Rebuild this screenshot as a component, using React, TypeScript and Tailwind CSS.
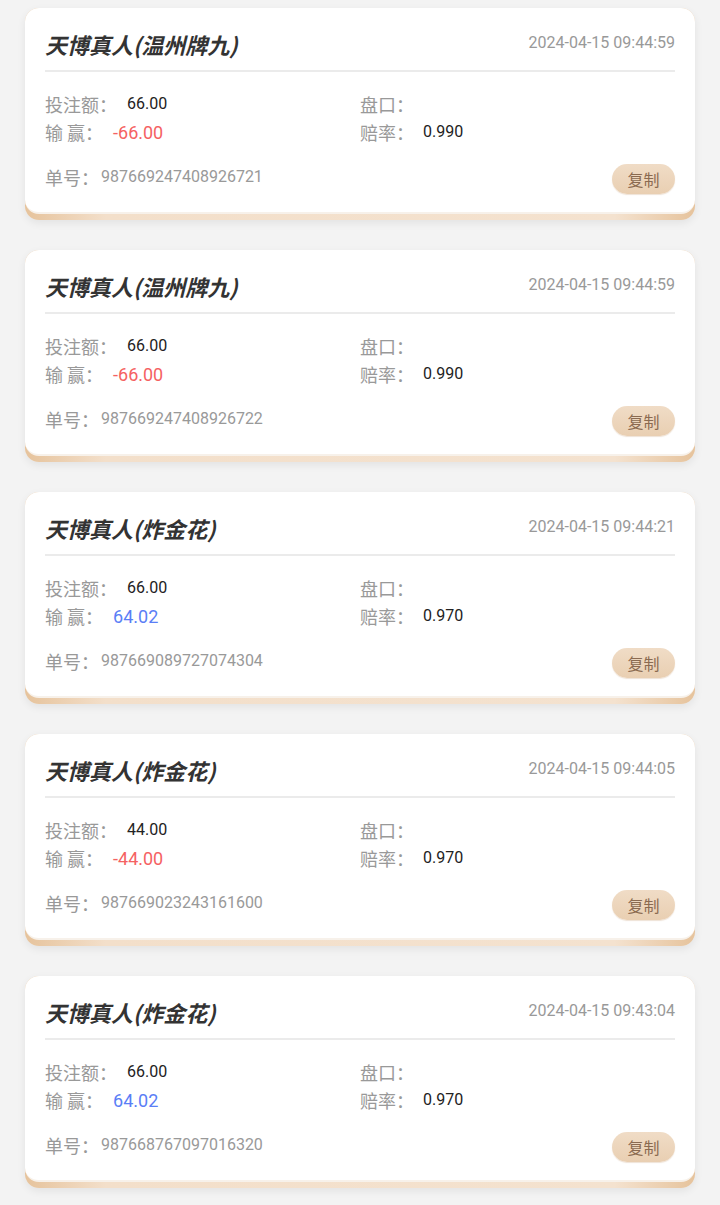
const bets = [
  { game: '温州牌九', time: '2024-04-15 09:44:59', amount: '66.00', win: '-66.00', odds: '0.990', no: '987669247408926721' },
  { game: '温州牌九', time: '2024-04-15 09:44:59', amount: '66.00', win: '-66.00', odds: '0.990', no: '987669247408926722' },
  { game: '炸金花', time: '2024-04-15 09:44:21', amount: '66.00', win: '64.02', odds: '0.970', no: '987669089727074304' },
  { game: '炸金花', time: '2024-04-15 09:44:05', amount: '44.00', win: '-44.00', odds: '0.970', no: '987669023243161600' },
  { game: '炸金花', time: '2024-04-15 09:43:04', amount: '66.00', win: '64.02', odds: '0.970', no: '987668767097016320' },
];

const cjk = "font-['Noto_Sans_CJK_SC',sans-serif]";
const num = "font-['Roboto','Noto_Sans_CJK_SC',sans-serif]";

function BetCard({ bet }: { bet: (typeof bets)[number] }) {
  const lost = bet.win.startsWith('-');
  return (
    <div className="rounded-[14px] bg-[linear-gradient(to_right,#e6c39c,#f3dfca_12%,#f4e2cf_88%,#e6c39c)] pb-[6px] shadow-[0_3px_8px_rgba(0,0,0,0.07)]">
      <div className="rounded-[14px] border-b-2 border-[#f7f1ea] bg-white px-[20px] pt-[22px] pb-[18px]">
        <div className="flex items-center justify-between">
          <div className={`${cjk} text-[22px] leading-[28px] font-bold italic text-[#333]`}>
            天博真人({bet.game})
          </div>
          <div className={`${num} text-[16px] leading-[24px] text-[#999] -mt-[2px]`}>{bet.time}</div>
        </div>
        <div className="mt-[12px] h-[2px] bg-[#ebebeb]" />
        <div className="mt-[18px] grid grid-cols-2">
          <div className="flex flex-col">
            <div className="flex items-center gap-[10px] h-[28px]">
              <span className={`${cjk} text-[18px] text-[#999]`}>投注额：</span>
              <span className={`${num} text-[16px] text-[#222]`}>{bet.amount}</span>
            </div>
            <div className="flex items-center gap-[10px] h-[28px]">
              <span className={`${cjk} text-[18px] text-[#999]`}>输 赢：</span>
              <span className={`${num} text-[18px] ${lost ? 'text-[#f56262]' : 'text-[#5a7ef6]'}`}>{bet.win}</span>
            </div>
          </div>
          <div className="flex flex-col">
            <div className="flex items-center gap-[10px] h-[28px]">
              <span className={`${cjk} text-[18px] text-[#999]`}>盘口：</span>
            </div>
            <div className="flex items-center gap-[9px] h-[28px]">
              <span className={`${cjk} text-[18px] text-[#999]`}>赔率：</span>
              <span className={`${num} text-[16px] text-[#222]`}>{bet.odds}</span>
            </div>
          </div>
        </div>
        <div className="mt-[18px] flex items-center justify-between h-[30px]">
          <div className="flex items-center gap-[2px] -mt-[4px]">
            <span className={`${cjk} text-[18px] text-[#999]`}>单号：</span>
            <span className={`${num} text-[16px] text-[#999]`}>{bet.no}</span>
          </div>
          <button className={`${cjk} h-[30px] w-[63px] rounded-full bg-[linear-gradient(to_bottom,#f0dcc6,#e9cfb2)] text-[16px] text-[#8a6a50] shadow-[0_1px_1px_rgba(200,160,120,0.3)]`}>
            复制
          </button>
        </div>
      </div>
    </div>
  );
}

export default function App() {
  return (
    <div className="min-h-[1205px] bg-[#f3f3f3] px-[25px] pt-[8px] pb-[20px]">
      <div className="flex flex-col gap-[30px]">
        {bets.map((b) => (
          <BetCard key={b.no} bet={b} />
        ))}
      </div>
    </div>
  );
}
